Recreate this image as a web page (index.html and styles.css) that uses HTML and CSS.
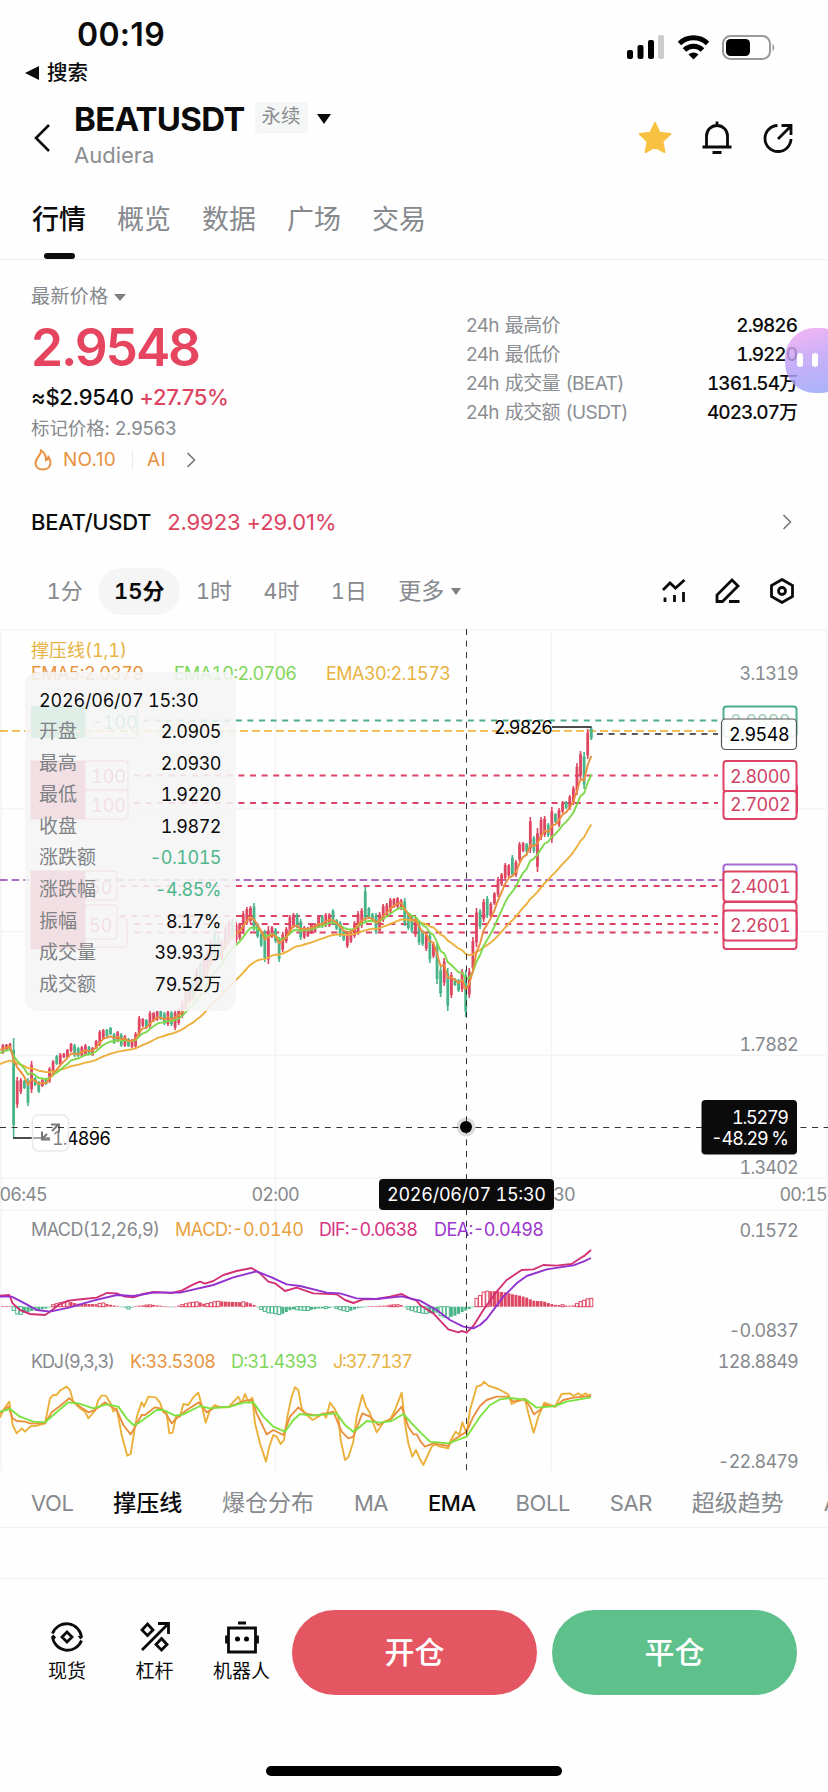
FILE: index.html
```
<!DOCTYPE html>
<html lang="zh-CN">
<head>
    <meta charset="UTF-8">
    <title>BEATUSDT</title>
    <link rel="stylesheet" href="styles.css">
</head>
<body>
<div class="status">
    <div class="status-left">
        <div class="time">00:19</div>
        <div class="back-app"><i></i>搜索</div>
    </div>
    <svg class="status-icons" width="150" height="26" viewBox="0 0 150 26">
        <rect x="0" y="15" width="6" height="9" rx="2"/>
        <rect x="10.500" y="10" width="6" height="14" rx="2"/>
        <rect x="21" y="5" width="6" height="19" rx="2"/>
        <rect x="31" y="0" width="6" height="24" rx="2" fill="#ccc"/>
        <g fill="none" stroke="#000" stroke-width="5">
            <path d="M52.500 8.500a20 20 0 0 1 28 0"/>
            <path d="M57.500 15a12.500 12.500 0 0 1 18 0"/>
        </g>
        <path d="M61.500 19.500a7 7 0 0 1 10 0l-5 5z"/>
        <rect x="96" y="1" width="47" height="23" rx="7.500" fill="none" stroke="#9a9a9a" stroke-width="2"/>
        <rect x="99" y="4" width="24" height="17" rx="4.500"/>
        <path d="M145.500 8.500q3.500 4 0 8z" fill="#9a9a9a"/>
    </svg>
</div>
<div class="header">
    <svg class="back" width="18" height="30" viewBox="0 0 18 30"><path d="M16 2L3 15l13 13"/></svg>
    <div class="symbol">
        <div class="symbol-name"><b>BEATUSDT</b><span class="tag">永续</span><i class="down"></i></div>
        <div class="symbol-sub">Audiera</div>
    </div>
    <div class="header-icons">
        <svg width="34" height="34" viewBox="0 0 34 34"><path fill="#f7c142" stroke="#f7c142" stroke-width="2" stroke-linejoin="round" d="M17 2l4.600 9.800 10.700 1.300-7.900 7.400 2.100 10.600L17 25.800l-9.500 5.300 2.100-10.600L1.700 13.100l10.700-1.300z"/></svg>
        <svg width="32" height="34" viewBox="0 0 32 34"><path class="line" d="M1.500 26h29M5.500 26V15a10.500 10.500 0 0 1 21 0v11M16 4.500V.5M11.500 31.500h9"/></svg>
        <svg width="32" height="34" viewBox="0 0 32 34"><path class="line" d="M15.500 4.500A13 13 0 1 0 29 18M16 18L28 6M19.500 4.500H29V14"/></svg>
    </div>
</div>
<ul class="tabs">
    <li class="active">行情</li>
    <li>概览</li>
    <li>数据</li>
    <li>广场</li>
    <li>交易</li>
</ul>
<div class="quote">
    <div class="quote-left">
        <div class="label">最新价格 <i class="down"></i></div>
        <div class="price">2.9548</div>
        <div class="usd">≈$2.9540 <span class="up">+27.75%</span></div>
        <div class="mark">标记价格: 2.9563</div>
        <div class="rank">
            <svg width="18" height="22" viewBox="0 0 18 22"><path d="M7 1.500C7.500 6 1.500 8.500 1.500 14c0 4.500 3.500 6.500 7.500 6.500s7.500-2.500 7.500-7c0-2.500-.8-4-2-5.500-.3 1.500-1 2.500-2.500 3C12 7 10.500 3.500 7 1.500z"/></svg>
            <span>NO.10</span><i class="sep"></i><span>AI</span>
            <svg class="chev" width="10" height="18" viewBox="0 0 10 18"><path d="M1.500 2L8.500 9l-7 7"/></svg>
        </div>
    </div>
    <div class="quote-right">
        <p><span>24h 最高价</span><em>2.9826</em></p>
        <p><span>24h 最低价</span><em>1.9220</em></p>
        <p><span>24h 成交量 (BEAT)</span><em>1361.54万</em></p>
        <p><span>24h 成交额 (USDT)</span><em>4023.07万</em></p>
    </div>
    <div class="robot"><i></i><i></i></div>
</div>
<div class="pair">
    <b>BEAT/USDT</b><span class="up">2.9923 +29.01%</span>
    <svg class="chev" width="10" height="18" viewBox="0 0 10 18"><path d="M1.500 2L8.500 9l-7 7"/></svg>
</div>
<div class="period">
    <ul>
        <li>1分</li>
        <li class="active">15分</li>
        <li>1时</li>
        <li>4时</li>
        <li>1日</li>
        <li class="more">更多<i class="down"></i></li>
    </ul>
    <div class="tools">
        <svg width="26" height="26" viewBox="0 0 26 26"><path class="line" d="M2 12l7-7 5.500 5L23.500 2M4 19.500v4.500M13.500 17v7M22.500 14v10"/></svg>
        <svg width="26" height="26" viewBox="0 0 26 26"><path class="line" d="M17 2l6 6L7.500 23.500H2V17zM14 23.500h10.500"/></svg>
        <svg width="26" height="26" viewBox="0 0 26 26"><path class="line" d="M13 1.500l10.500 6v11L13 24.500l-10.500-6v-11z"/><circle class="line" cx="13" cy="13" r="3.500"/></svg>
    </div>
</div>
<div class="chart">
    <svg width="828" height="849" viewBox="0 629 828 849">
        <path class="grid" d="M0 629.500H828M0 808.500H828M0 931.500H828M0 1055.500H828M0 1178H828M0 1210H828M1 629V1471M275.500 629V1471M551.500 629V1471M827 629V1471"/>

        <text class="c-line" x="31" y="656.500" textLength="96">撑压线(1,1)</text>
        <text class="c-k" x="31" y="679.500" textLength="113">EMA5:2.0379</text>
        <text class="c-d" x="174" y="679.500" textLength="123">EMA10:2.0706</text>
        <text class="c-line" x="326" y="679.500" textLength="125">EMA30:2.1573</text>

        <!-- open orders on the left -->
        <g class="orders">
            <rect x="31" y="706" width="54" height="32" fill="#4bb98c"/>
            <rect x="85" y="706" width="52" height="32" rx="3" fill="#fff" stroke="#4bb98c"/>
            <text x="91" y="729" fill="#4bb98c">-100</text>
            <g fill="#fff" stroke="#df4662">
                <rect x="31" y="761" width="54" height="58" fill="#df4662"/>
                <rect x="85" y="761" width="43" height="29" rx="3"/>
                <rect x="85" y="790" width="43" height="29" rx="3"/>
                <rect x="85" y="918" width="42" height="29" rx="3"/>
                <rect x="31" y="871" width="54" height="78" fill="#df4662"/>
                <rect x="85" y="871" width="32" height="29" rx="3"/>
                <rect x="85" y="905" width="32" height="34" rx="3"/>
            </g>
            <g fill="#df4662">
                <text x="91" y="783">100</text>
                <text x="91" y="812">100</text>
                <text x="89" y="894">50</text>
                <text x="89" y="932">50</text>
            </g>
        </g>

        <g class="levels">
            <path stroke="#4fae8a" d="M143 720.500H718"/>
            <path stroke="#f0c05a" stroke-dasharray="8 4" d="M0 731H718"/>
            <path stroke="#dd4364" d="M134 775.500H718M134 803H718M120 886H718M120 916H718M134 924H718M134 932.500H718"/>
            <path stroke="#ab6cc4" stroke-dasharray="7.600 4" d="M0 880H723"/>
            <path stroke="#222" stroke-width="1.500" d="M597 734H718"/>
        </g>

        <g id="candles"></g>
        <g class="ema">
            <polyline id="ema30" stroke="#ecb03d"/>
            <polyline id="ema10" stroke="#7dd84c"/>
            <polyline id="ema5" stroke="#ea8f3e"/>
        </g>

        <text class="mark-text" x="494" y="734" textLength="59">2.9826</text>
        <path class="solid" d="M552 727H591.500"/>
        <path class="solid" d="M13 1138H50"/>
        <text class="mark-text" x="52" y="1144.500" textLength="59">1.4896</text>

        <g class="full">
            <rect x="32.500" y="1115" width="36" height="36" rx="6"/>
            <path d="M52 1131l6-6M51 1124.500h8v8M47 1134l-5 5M42 1131.500v8h8"/>
        </g>

        <g class="price-box">
            <rect x="723.500" y="706.500" width="73" height="30" rx="3" stroke="#4fae8a"/>
            <text x="760" y="728" fill="#a9cfc0">2.9899</text>
            <rect x="721.500" y="719" width="75" height="30.500" rx="4" stroke="#555" stroke-width="1.200" fill-opacity=".9"/>
            <text x="759" y="741" fill="#000">2.9548</text>
            <g stroke="#dd4364">
                <rect x="725" y="784" width="72" height="30" rx="3"/>
                <rect x="723.500" y="761" width="73" height="31" rx="3"/>
                <rect x="723.500" y="791" width="73" height="28" rx="3"/>
                <rect x="723.500" y="864.500" width="73" height="30" rx="3" stroke="#a46cd6"/>
                <rect x="723.500" y="902" width="73" height="30" rx="3"/>
                <rect x="723.500" y="871.500" width="73" height="30" rx="3"/>
                <rect x="723.500" y="918" width="73" height="31" rx="3"/>
                <rect x="723.500" y="910.500" width="73" height="30" rx="3"/>
            </g>
            <g fill="#cf4466">
                <text x="760" y="783">2.8000</text>
                <text x="760" y="811">2.7002</text>
                <text x="760" y="893">2.4001</text>
                <text x="760" y="932">2.2601</text>
            </g>
        </g>

        <g class="axis">
            <text x="798" y="680">3.1319</text>
            <text x="798" y="1050.500">1.7882</text>
            <text x="798" y="1173.500">1.3402</text>
            <text x="798" y="1236.500">0.1572</text>
            <text x="798" y="1336.500">-0.0837</text>
            <text x="798" y="1368">128.8849</text>
            <text x="798" y="1468">-22.8479</text>
            <text x="47" y="1201">06:45</text>
            <text x="299" y="1201">02:00</text>
            <text x="575" y="1201">11:30</text>
            <text x="827" y="1201">00:15</text>
        </g>

        <text class="c-name" x="31" y="1236" textLength="129">MACD(12,26,9)</text>
        <text class="c-macd" x="175" y="1236" textLength="129">MACD:-0.0140</text>
        <text class="c-dif" x="319" y="1236" textLength="99">DIF:-0.0638</text>
        <text class="c-dea" x="434" y="1236" textLength="110">DEA:-0.0498</text>
        <g id="macd"></g>
        <g class="ind" transform="translate(0 1250) scale(.33333)">
            <polyline stroke="#d23173" points="0,137 28,135 38,160 60,180 90,192 135,195 150,185 175,165 205,152 250,147 290,143 320,129 350,130 375,140 400,142 430,132 460,126 490,127 515,129 545,122 580,103 600,95 615,101 640,93 670,75 710,63 755,54 780,70 805,95 825,100 855,123 890,113 940,130 1010,133 1035,150 1060,159 1090,148 1130,147 1170,140 1205,132 1230,145 1250,152 1260,165 1300,190 1345,238 1375,247 1385,243 1400,248 1420,228 1450,180 1490,125 1520,90 1565,60 1600,58 1630,45 1670,47 1715,42 1745,22 1755,16 1773,0"/>
            <polyline stroke="#9131cf" points="0,140 35,140 80,163 110,180 150,185 210,172 280,152 350,135 400,138 460,128 540,128 640,105 700,82 770,64 815,82 860,103 900,108 980,128 1020,130 1070,145 1130,147 1205,139 1260,152 1310,180 1350,210 1390,230 1420,235 1440,225 1460,207 1510,140 1550,100 1580,78 1640,58 1720,46 1750,35 1773,24"/>
        </g>

        <text class="c-name" x="31" y="1367.500" textLength="84">KDJ(9,3,3)</text>
        <text class="c-k" x="130" y="1367.500" textLength="86">K:33.5308</text>
        <text class="c-d" x="231" y="1367.500" textLength="87">D:31.4393</text>
        <text class="c-line" x="333" y="1367.500" textLength="80">J:37.7137</text>
        <g class="ind" transform="translate(0 1250) scale(.33333)">
            <polyline stroke="#ebb03a" points="0,503 10,480 28,455 38,525 50,550 65,535 75,545 85,535 95,527 105,528 135,520 150,445 160,435 170,435 180,422 200,410 210,420 220,455 240,475 255,485 265,505 285,482 295,450 305,437 318,437 325,450 332,460 340,485 350,475 365,555 382,617 392,612 405,530 412,495 425,457 432,470 445,440 467,442 480,458 490,487 500,490 508,550 518,548 528,500 540,500 550,462 565,465 580,442 595,428 605,465 617,518 630,480 645,465 660,472 685,472 715,440 725,460 735,432 745,455 757,443 765,520 780,580 798,635 808,590 820,555 830,560 842,582 852,570 862,500 875,440 885,412 895,420 905,475 920,495 938,510 955,500 970,490 978,503 990,458 1005,478 1015,500 1022,570 1035,630 1045,622 1060,575 1070,500 1087,435 1098,470 1108,485 1120,520 1130,547 1152,515 1170,510 1185,480 1205,428 1215,520 1225,580 1237,620 1248,600 1260,628 1270,645 1295,590 1305,583 1320,590 1345,595 1350,575 1367,545 1378,555 1387,517 1400,550 1410,480 1430,410 1445,405 1452,395 1465,407 1495,417 1525,433 1535,462 1555,453 1575,448 1585,490 1601,548 1615,500 1633,458 1660,468 1665,470 1685,432 1710,430 1720,438 1735,430 1745,437 1757,430 1765,437 1773,433"/>
            <polyline stroke="#e9903f" points="0,490 25,470 38,505 50,513 75,515 90,520 135,520 155,487 180,468 208,445 225,460 265,487 285,480 315,457 350,480 370,525 392,553 400,540 425,495 435,495 465,472 480,475 495,487 515,520 535,500 560,480 597,457 620,487 645,472 690,470 735,452 757,450 770,490 800,553 820,540 850,555 870,500 895,472 915,490 950,497 1000,485 1025,545 1045,565 1060,560 1087,490 1110,500 1135,525 1175,505 1205,470 1225,530 1240,553 1250,553 1262,575 1275,590 1300,580 1345,588 1360,570 1400,545 1420,500 1440,468 1460,450 1490,440 1525,440 1540,455 1575,447 1590,470 1602,493 1620,480 1635,465 1665,470 1690,450 1720,443 1773,438"/>
            <polyline stroke="#7be23f" points="0,485 30,477 60,500 100,515 135,517 160,495 205,457 235,460 280,475 320,463 355,470 380,505 400,525 415,520 470,480 490,480 525,497 550,493 600,468 630,475 690,470 730,458 760,457 790,500 820,530 855,545 880,510 900,492 935,497 1010,490 1035,525 1060,545 1075,535 1100,513 1140,518 1175,513 1210,492 1235,520 1262,548 1290,575 1345,580 1400,560 1440,500 1470,465 1500,448 1530,444 1580,450 1610,473 1650,470 1665,468 1700,455 1773,442"/>
        </g>

        <path class="cross" d="M466.500 629V1471M0 1127.500H828"/>
        <circle cx="466" cy="1127" r="9.500" fill="#000" fill-opacity=".13"/>
        <circle cx="466" cy="1127" r="6"/>
        <g class="cross-tag">
            <rect x="701.500" y="1100" width="95.500" height="54.500" rx="4"/>
            <text x="789" y="1123.500" text-anchor="end" textLength="57">1.5279</text>
            <text x="789" y="1145" text-anchor="end" textLength="78">-48.29 %</text>
            <rect x="379" y="1179" width="175" height="31" rx="4"/>
            <text x="387" y="1201" textLength="159">2026/06/07 15:30</text>
        </g>
    </svg>
    <div class="detail">
        <h4>2026/06/07 15:30</h4>
        <p><span>开盘</span><em>2.0905</em></p>
        <p><span>最高</span><em>2.0930</em></p>
        <p><span>最低</span><em>1.9220</em></p>
        <p><span>收盘</span><em>1.9872</em></p>
        <p><span>涨跌额</span><em class="down-c">-0.1015</em></p>
        <p><span>涨跌幅</span><em class="down-c">-4.85%</em></p>
        <p><span>振幅</span><em>8.17%</em></p>
        <p><span>成交量</span><em>39.93万</em></p>
        <p><span>成交额</span><em>79.52万</em></p>
    </div>
</div>
<ul class="inds">
    <li class="en">VOL</li>
    <li class="active">撑压线</li>
    <li>爆仓分布</li>
    <li class="en">MA</li>
    <li class="en active">EMA</li>
    <li class="en">BOLL</li>
    <li class="en">SAR</li>
    <li>超级趋势</li>
    <li class="en">AI</li>
</ul>
<div class="footer">
    <div class="entry">
        <svg width="34" height="34" viewBox="0 0 34 34"><path class="line" d="M2.500 13.500A15 15 0 0 1 31.500 17.500M31.500 20.500A15 15 0 0 1 2.500 16.500M17 12l5 5-5 5-5-5zM29 15.500l2.500 3M5 18.500l-2.500-3"/></svg>
        <span>现货</span>
    </div>
    <div class="entry">
        <svg width="34" height="34" viewBox="0 0 34 34"><path class="line" d="M4 30L30 4M20 3.500h10.500V14M9.500 4l5.500 6-5.500 5.500L4 10zM23.500 18.500l5.500 6-5.500 5.500-5.500-5.500z"/></svg>
        <span>杠杆</span>
    </div>
    <div class="entry">
        <svg width="34" height="34" viewBox="0 0 34 34"><path class="line" d="M3.500 8h27v24h-27zM13 3h8M1.500 15.500v8M32.500 15.500v8"/><circle cx="12.500" cy="19" r="2.500"/><circle cx="21.500" cy="19" r="2.500"/></svg>
        <span>机器人</span>
    </div>
    <a class="btn open">开仓</a>
    <a class="btn close">平仓</a>
</div>
<div class="home"></div>
<script src="chart.js"></script>
</body>
</html>
```
FILE: styles.css
```
*{margin:0;padding:0;list-style:none;box-sizing:border-box;}
em,i{font-style: normal;}
body{
    width: 828px;
    height: 1792px;
    overflow: hidden;
    background: #fefefe;
    color: #0b0b0b;
    font-family: Inter,"Noto Sans CJK SC",sans-serif;
    display: flex;
    flex-direction: column;
}
svg{display: block;flex: none;}
.line{fill: none;stroke: #0b0b0b;stroke-width: 2.8;}
.up{color: #dc4462;}
.down{
    display: inline-block;
    border: 7px solid transparent;
    border-top: 10px solid #0b0b0b;
    border-bottom: 0;
}
.chev path{fill: none;stroke: #777;stroke-width: 1.6;}

/* status bar */
.status{
    height: 92px;
    padding: 16px 51px 0 25px;
    display: flex;
    justify-content: space-between;
}
.time{font-size: 32px;line-height: 38px;font-weight: 600;margin-left: 52px;letter-spacing: .3px;}
.back-app{display: flex;align-items: center;font-size: 20.5px;line-height: 37px;font-weight: 500;}
.back-app i{
    border: 7px solid transparent;
    border-right: 14px solid #0b0b0b;
    border-left: 0;
    margin-right: 8px;
}
.status-icons{margin-top: 19px;}

/* header */
.header{height: 88px;padding: 8px 34px 0 33px;display: flex;}
.back{margin: 23px 23px 0 0;}
.back path{fill: none;stroke: #0b0b0b;stroke-width: 2.6;}
.symbol{flex: 1;}
.symbol-name{height: 38px;display: flex;align-items: center;}
.symbol-name b{font-size: 33px;line-height: 38px;font-weight: 650;letter-spacing: -.7px;}
.tag{
    height: 31px;
    line-height: 29px;
    padding: 0 7px;
    margin: -3px 9px 0 10px;
    border-radius: 3px;
    background: #f5f6f6;
    color: #8b8e92;
    font-size: 19.5px;
}
.symbol-sub{font-size: 22px;line-height: 34px;color: #8b8e92;}
.header-icons{display: flex;gap: 29px;margin-top: 21px;}

.tabs{
    height: 80px;
    padding: 16px 32px 0;
    border-bottom: 1px solid #eee;
    display: flex;
    gap: 31px;
}
.tabs li{
    font-size: 27px;
    line-height: 48px;
    color: #86898d;
    display: flex;
    flex-direction: column;
    align-items: center;
}
.tabs .active{color: #0b0b0b;font-weight: 500;}
.tabs .active:after{
    content: "";
    width: 31px;
    height: 6px;
    margin-top: 9px;
    border-radius: 3px;
    background: #0b0b0b;
}

/* last price and 24h stats */
.quote{
    height: 234px;
    padding: 22px 31px 0 31px;
    display: flex;
    justify-content: space-between;
    position: relative;
}
.label{font-size: 19px;line-height: 30px;color: #86898d;letter-spacing: .4px;}
.label .down,.more .down{border-width: 7px 6px 0;border-top-color: #7d8084;vertical-align: 2px;}
.price{font-size: 51.5px;line-height: 70px;font-weight: 600;color: #e64560;letter-spacing: -2.1px;}
.usd{font-size: 22px;line-height: 31px;font-weight: 500;letter-spacing: -.3px;}
.mark{font-size: 18.5px;line-height: 30px;color: #86898d;letter-spacing: -.1px;}
.rank{
    height: 33px;
    display: flex;
    align-items: center;
    font-size: 19px;
    color: #e8913f;
}
.rank svg{fill: none;stroke: #e8913f;stroke-width: 2;margin-left: 3px;}
.rank span{margin-left: 11px;letter-spacing: .3px;}
.rank .sep{width: 1px;height: 18px;background: #ececec;margin: 0 3px 0 16px;}
.rank .chev{margin-left: 20px;}
.quote-right{width: 331px;padding-top: 29px;}
.quote-right p,.detail p{display: flex;justify-content: space-between;}
.quote-right p{font-size: 19px;line-height: 29px;color: #8b8e92;}
.quote-right span{letter-spacing: -.6px;word-spacing: 1px;}
.quote-right em{color: #0b0b0b;font-weight: 500;letter-spacing: -1px;font-variant-numeric: tabular-nums;}
.robot{
    position: absolute;
    right: -22px;
    top: 68px;
    width: 65px;
    height: 65px;
    border-radius: 30px;
    background: linear-gradient(165deg,#f0a5f2 5%,#b9a0f8 50%,#96a4f8 95%);
    opacity: .82;
    display: flex;
    gap: 9px;
    padding: 25px 0 0 12px;
}
.robot i{width: 6px;height: 14px;border-radius: 3px;background: #fff;}

.pair{
    height: 56px;
    padding: 0 36px 0 31px;
    display: flex;
    align-items: center;
    font-size: 22px;
}
.pair b{font-weight: 500;margin-right: 16px;letter-spacing: -.3px;}
.pair span{letter-spacing: -.1px;}
.pair .chev{margin-left: auto;}

/* period switch */
.period{
    height: 79px;
    padding: 3px 33px 0 31px;
    display: flex;
    align-items: center;
    justify-content: space-between;
}
.period ul{display: flex;color: #86898d;font-size: 22px;line-height: 47px;font-variant-numeric: tabular-nums;}
.period li{padding: 0 15.6px;}
.period .active{color: #0b0b0b;font-weight: 600;background: #f5f5f5;border-radius: 24px;}
.period .more{font-size: 23px;}
.more .down{margin-left: 7px;border-width: 7px 5px 0;vertical-align: 4px;}
.tools{display: flex;gap: 28px;}

/* chart */
.chart{height: 849px;position: relative;font-variant-numeric: tabular-nums;}
.chart text{font-size: 18px;}
.grid{stroke: #f4f4f4;stroke-width: 1.5;fill: none;}
.levels{fill: none;stroke-width: 2;stroke-dasharray: 6 5.6;}
.ema polyline,.ind polyline{fill: none;stroke-width: 1.9;stroke-linejoin: round;}
.ind polyline{stroke-width: 5.7;}
.c-line{fill: #e8b342;}
.c-k{fill: #e79440;}
.c-d{fill: #80d65a;}
.c-macd{fill: #e8a13f;}
.c-dif{fill: #d63384;}
.c-dea{fill: #9c36cc;}
.c-name{fill: #86898d;}
.axis{fill: #86898d;text-anchor: end;letter-spacing: -.8px;}
.solid{stroke: #111;stroke-width: 1.6;}
.price-box{fill: #fff;stroke-width: 2;text-anchor: middle;}
.price-box text{stroke: none;letter-spacing: -.5px;}
.cross{fill: none;stroke: #333;stroke-width: 1;stroke-dasharray: 6 5.6;}
.cross-tag{fill: #0b0b0b;}
.cross-tag text{fill: #fff;}
.full rect{fill: #fff;fill-opacity: .5;stroke: #e9e9e9;stroke-width: 1.5;}
.full path{fill: none;stroke: #777;stroke-width: 2;}
.detail{
    position: absolute;
    left: 25px;
    top: 43px;
    width: 211px;
    height: 339px;
    padding: 13px 15px 0 14px;
    border-radius: 12px;
    background: rgba(245,245,245,.88);
    font-size: 18px;
}
.detail h4{font-weight: 400;line-height: 31px;letter-spacing: -.2px;}
.detail p{line-height: 31.6px;color: #7f8286;}
.detail span{font-size: 19px;}
.detail em{color: #0b0b0b;letter-spacing: -.5px;}
.detail .down-c{color: #4fb58c;}

.inds{
    height: 50px;
    padding-left: 31px;
    border-bottom: 1px solid #f1f1f1;
    display: flex;
    gap: 39.8px;
    white-space: nowrap;
    color: #86898d;
    font-size: 23px;
    line-height: 50px;
}
.inds .en{font-size: 22px;letter-spacing: -.4px;}
.inds .active{color: #0b0b0b;font-weight: 500;}

/* bottom bar */
.footer{
    height: 170px;
    margin-top: 50px;
    padding: 31px 31px 0 23px;
    border-top: 1px solid #f0f0f0;
    display: flex;
}
.entry{
    width: 87px;
    padding-top: 10px;
    display: flex;
    flex-direction: column;
    align-items: center;
    font-size: 19px;
    line-height: 34px;
}
.entry:first-child{width: 88px;}
.entry svg{margin-bottom: 1px;}
.btn{
    flex: 1;
    height: 85px;
    border-radius: 43px;
    color: #fff;
    font-size: 30px;
    line-height: 84px;
    font-weight: 500;
    text-align: center;
}
.open{background: #e55663;margin-left: 7px;}
.close{background: #5ec08b;margin-left: 15px;}
.home{width: 296px;height: 10px;margin: 18px auto 0;border-radius: 5px;background: #000;}
```
FILE: chart.js
```
window.onload=function(){
    var NS="http://www.w3.org/2000/svg";
    var RED="#df4662",GREEN="#49b488";
    var STEP=3.588;
    //每根K线: 最高, 最低, 1涨 0跌
    var bars=[
        [1044,1054,1],[1044,1050,1],[1043,1050,1],[1038,1137,0],[1077,1108,1],[1078,1094,1],[1080,1089,0],[1078,1106,0],
        [1061,1093,1],[1077,1086,0],[1081,1093,0],[1079,1087,1],[1078,1085,0],[1067,1083,1],[1060,1073,1],[1055,1065,0],
        [1053,1066,1],[1053,1058,1],[1049,1058,1],[1043,1052,1],[1044,1057,0],[1047,1057,0],[1046,1057,1],[1044,1056,1],
        [1046,1055,0],[1047,1056,1],[1040,1049,1],[1030,1046,1],[1029,1040,1],[1029,1037,0],[1027,1035,0],[1033,1044,0],
        [1031,1042,1],[1033,1047,0],[1035,1047,1],[1038,1047,0],[1039,1048,1],[1032,1048,1],[1016,1036,1],[1018,1027,1],
        [1019,1029,0],[1011,1028,1],[1012,1022,1],[1010,1021,1],[1010,1020,0],[1012,1025,0],[1010,1026,1],[1011,1026,0],
        [1010,1030,1],[1008,1025,1],[1000,1018,1],[990,1010,1],[985,1003,1],[978,1000,0],[968,990,1],[962,985,0],
        [957,980,1],[950,975,1],[940,965,1],[930,962,0],[935,955,0],[940,960,1],[925,950,1],[920,945,1],[918,940,0],
        [922,943,1],[923,940,1],[911,934,1],[907,925,1],[906,923,1],[903,931,0],[923,938,0],[932,947,0],[930,962,0],
        [926,964,1],[926,938,1],[928,943,0],[937,962,0],[932,952,1],[927,943,1],[915,934,1],[913,928,1],[913,928,0],
        [919,940,0],[926,939,1],[927,937,1],[923,934,1],[923,933,1],[915,928,1],[915,928,0],[913,927,1],[913,927,1],
        [909,925,0],[919,930,0],[921,937,0],[930,941,0],[931,948,1],[930,943,1],[921,938,1],[911,935,1],[908,928,1],
        [887,922,0],[907,918,0],[913,922,0],[913,934,0],[912,933,1],[904,922,1],[903,917,1],[898,913,1],[898,908,1],
        [897,908,1],[899,910,1],[898,926,0],[913,930,0],[915,933,0],[917,937,1],[922,945,0],[930,946,0],[933,951,1],
        [932,963,0],[942,958,1],[943,984,0],[967,997,0],[958,986,1],[968,1011,0],[972,998,1],[978,986,0],[979,992,0],
        [969,992,1],[970,1017,0],[968,998,1],[937,972,1],[908,947,1],[909,929,0],[899,922,1],[896,918,0],[902,918,1],
        [892,905,1],[877,897,1],[873,886,1],[863,880,1],[864,877,1],[855,877,0],[860,877,1],[842,862,1],[842,852,1],
        [843,853,0],[817,853,1],[836,853,0],[828,872,1],[817,840,1],[816,837,1],[823,837,0],[807,843,1],[813,823,0],
        [808,827,1],[801,813,1],[801,809,0],[795,810,1],[786,805,1],[763,795,1],[751,779,1],[752,789,0],[729,759,1],
        [727,740,0]
    ];
    //MACD柱: x, 高度
    var hist=[[0,.7],[10,.7],[13,-3],[16,-7],[20,-8],[25,-6],[33,-4],[40,-3],[47,-1.5],[50,0],[53,2],[60,4],[68,5.5],
        [77,3],[97,2.5],[102,4],[110,2],[118,.5],[125,-1],[128,-2.5],[133,-.5],[138,1],[152,2],[160,1],[173,-.5],
        [182,2],[190,4],[198,5],[205,2.5],[217,5.5],[227,5],[240,4.5],[245,5],[252,3],[257,0],[260,-2],[267,-6],
        [273,-6.5],[280,-8],[283,-7],[292,-2.5],[307,-4],[320,-1.5],[327,-2],[333,-.5],[340,-3],[348,-5],[358,-1.5],
        [370,.5],[383,1],[397,2],[403,1.5],[407,-2],[415,-5],[420,-6],[425,-7],[437,-6],[442,-10],[448,-11],[455,-9],
        [463,-5],[470,-2],[473,0],[476,8],[480,11],[483,14.5],[487,15.5],[497,15.5],[507,14],[512,12.5],[520,11],
        [527,9],[533,6],[543,5.5],[550,3],[557,1.5],[563,2],[567,.8],[575,1.5],[578,4],[583,6],[588,8],[593,8.5]];

    function $(id){
        return document.getElementById(id);
    }
    function rect(parent,x,y,w,h,fill,stroke){
        var r=document.createElementNS(NS,"rect");
        r.setAttribute("x",x);
        r.setAttribute("y",y);
        r.setAttribute("width",w);
        r.setAttribute("height",h);
        r.setAttribute("fill",fill);
        if (stroke) {r.setAttribute("stroke",stroke)};
        parent.appendChild(r);
    }
    function barX(i){
        return 591.3-(bars.length-1-i)*STEP;
    }
    //画K线
    for(var i=0;i<bars.length;i++){
        var b=bars[i],h=b[1]-b[0],c=b[2]?RED:GREEN,x=barX(i);
        rect($("candles"),x-.8,b[0],1.6,h,c);
        rect($("candles"),x-1.4,b[0]+h*.12,2.8,h*.76,c);
    }
    //均线
    function ema(id,n,start){
        var v=start,a=2/(n+1),pts=["0,"+start];
        for(var i=0;i<bars.length;i++){
            var b=bars[i],h=b[1]-b[0];
            var close=b[2]?b[0]+h*.2:b[1]-h*.2;
            if (i==3) {close=1085};
            v=v+(close-v)*a;
            pts.push(barX(i).toFixed(1)+","+v.toFixed(1));
        }
        $(id).setAttribute("points",pts.join(" "));
    }
    ema("ema5",5,1050);
    ema("ema10",10,1053);
    ema("ema30",30,1064);

    //MACD柱状图
    function height(x){
        for(var i=1;i<hist.length;i++){
            if (x<=hist[i][0]) {
                var p=hist[i-1],q=hist[i];
                return p[1]+(q[1]-p[1])*(x-p[0])/(q[0]-p[0]);
            }
        }
        return 8;
    }
    var prev=0;
    for(var i=0;i<bars.length;i++){
        var x=barX(i),v=height(x),c=v>0?RED:GREEN;
        var grow=Math.abs(v)>Math.abs(prev)&&Math.abs(v)>1.5;
        rect($("macd"),x-1.5,v>0?1306.7-v:1306.7,3,Math.max(Math.abs(v),.6),grow?"#fff":c,grow?c:"");
        prev=v;
    }
};
```
